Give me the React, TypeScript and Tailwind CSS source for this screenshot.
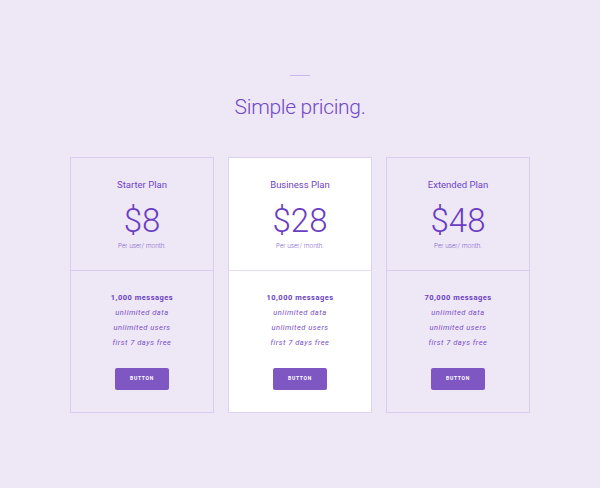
const plans = [
  { name: 'Starter Plan', price: '$8', messages: '1,000 messages', featured: false },
  { name: 'Business Plan', price: '$28', messages: '10,000 messages', featured: true },
  { name: 'Extended Plan', price: '$48', messages: '70,000 messages', featured: false },
];

function PlanCard({ name, price, messages, featured }: (typeof plans)[number]) {
  return (
    <div
      className={`flex w-[144px] flex-col border ${
        featured ? 'border-[#ddd2f0] bg-white' : 'border-[#d9ccef] bg-[#eee7f6]'
      }`}
    >
      <div
        className={`flex h-[113px] flex-col items-center border-b pt-[20px] ${
          featured ? 'border-[#e6ddf4]' : 'border-[#d9ccef]'
        }`}
      >
        <div className="text-[9.5px] leading-[14px] text-[#6f45c6]">{name}</div>
        <div className="mt-[9px] text-[33px] font-light leading-[40px] text-[#6a3dc2]">{price}</div>
        <div className="text-[6.5px] font-light leading-[10px] text-[#8262cc]">Per user/ month.</div>
      </div>
      <div className="flex flex-col items-center pt-[19px] pb-[22px]">
        <div className="text-[7.5px] font-bold leading-[15px] tracking-[0.5px] text-[#6a3fc1]">{messages}</div>
        <div className="text-[7.5px] italic leading-[15px] tracking-[0.5px] text-[#7850c6]">unlimited data</div>
        <div className="text-[7.5px] italic leading-[15px] tracking-[0.5px] text-[#7850c6]">unlimited users</div>
        <div className="text-[7.5px] italic leading-[15px] tracking-[0.5px] text-[#7850c6]">first 7 days free</div>
        <button className="mt-[18px] flex h-[22px] w-[54px] items-center justify-center rounded-[2px] bg-[#7e57c2] text-[5px] font-bold tracking-[0.7px] text-white">
          BUTTON
        </button>
      </div>
    </div>
  );
}

export default function App() {
  return (
    <div
      className="flex h-[488px] w-[600px] flex-col items-center bg-[#eee7f6]"
      style={{ fontFamily: 'Roboto, "Liberation Sans", sans-serif' }}
    >
      <div className="mt-[75px] h-px w-[20px] bg-[#c9b6ea]" />
      <h1 className="mt-[15px] text-[21px] font-light leading-[32px] tracking-[-0.3px] text-[#7048c6]">
        Simple pricing.
      </h1>
      <div className="mt-[34px] flex gap-[14px]">
        {plans.map((p) => (
          <PlanCard key={p.name} {...p} />
        ))}
      </div>
    </div>
  );
}
